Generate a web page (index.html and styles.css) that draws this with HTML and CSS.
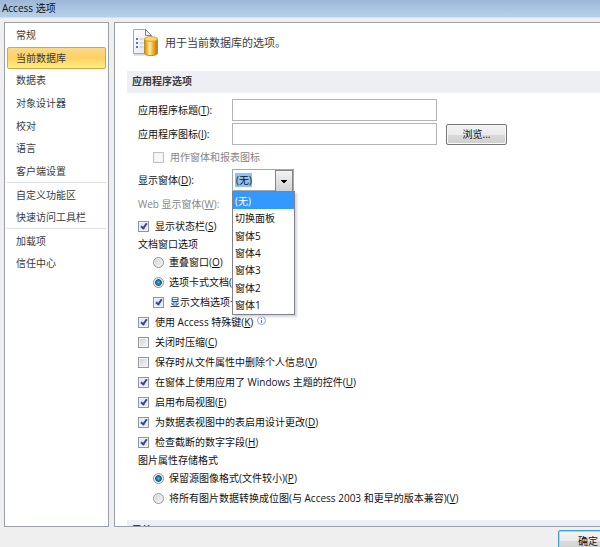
FILE: index.html
```html
<!DOCTYPE html>
<html lang="zh-CN">
<head>
    <meta charset="UTF-8">
    <meta name="viewport" content="width=device-width, initial-scale=1.0">
    <title>Access 选项</title>
    <link rel="stylesheet" href="styles.css">
</head>
<body>
    <header class="titlebar">Access 选项</header>
    <div class="panels">
        <nav class="sidebar">
            <div class="nav-group nav-main">
                <a href="#">常规</a>
                <a href="#" class="active">当前数据库</a>
                <a href="#">数据表</a>
                <a href="#">对象设计器</a>
                <a href="#">校对</a>
                <a href="#">语言</a>
                <a href="#">客户端设置</a>
            </div>
            <div class="nav-group">
                <a href="#">自定义功能区</a>
                <a href="#">快速访问工具栏</a>
            </div>
            <div class="nav-group">
                <a href="#">加载项</a>
                <a href="#">信任中心</a>
            </div>
        </nav>
        <main class="content">
            <div class="intro">
                <svg width="26" height="28" viewBox="0 0 26 28" aria-hidden="true">
                    <defs>
                        <linearGradient id="gold" x1="0" x2="1" y1="0" y2="0">
                            <stop offset="0" stop-color="#c98a14"/>
                            <stop offset=".2" stop-color="#f0b93a"/>
                            <stop offset=".4" stop-color="#fff0a8"/>
                            <stop offset=".65" stop-color="#f0b32c"/>
                            <stop offset="1" stop-color="#b87508"/>
                        </linearGradient>
                        <linearGradient id="paper" x1="0" x2="1" y1="0" y2="1">
                            <stop offset="0" stop-color="#fff"/>
                            <stop offset="1" stop-color="#dfe7f1"/>
                        </linearGradient>
                    </defs>
                    <path d="M1 25.5h13" stroke="#d5d5d8" stroke-width="2"/>
                    <path d="M.5 .5h12l6 6v18H.5z" fill="url(#paper)" stroke="#9aabc2"/>
                    <path d="M12.5 .5v6h6z" fill="#e6edf6" stroke="#7187a5"/>
                    <path d="M3 10h2M3 14h2M3 18h2" stroke="#557bb0" stroke-width="2"/>
                    <path d="M6.5 10h4M6.5 14h4M6.5 18h4" stroke="#b5c3d8"/>
                    <path d="M11.5 10v14c0 3.5 13 3.5 13 0V10z" fill="url(#gold)" stroke="#c48a20"/>
                    <ellipse cx="18" cy="10" rx="6.5" ry="2.3" fill="#ffd768" stroke="#d9a235"/>
                </svg>
                <span>用于当前数据库的选项。</span>
            </div>
            <h2>应用程序选项</h2>
            <form class="options">
                <div class="field">
                    <label for="appTitle">应用程序标题(<u>T</u>):</label>
                    <input type="text" id="appTitle">
                </div>
                <div class="field">
                    <label for="appIcon">应用程序图标(<u>I</u>):</label>
                    <input type="text" id="appIcon">
                    <button type="button" class="browse">浏览...</button>
                </div>
                <label class="option sub icon-option disabled"><input type="checkbox" disabled>用作窗体和报表图标</label>
                <div class="field">
                    <label for="showForm">显示窗体(<u>D</u>):</label>
                    <div class="combo">
                        <select id="showForm">
                            <option>(无)</option>
                            <option>切换面板</option>
                            <option>窗体5</option>
                            <option>窗体4</option>
                            <option>窗体3</option>
                            <option>窗体2</option>
                            <option>窗体1</option>
                        </select>
                        <ul class="dropdown">
                            <li class="current">(无)</li>
                            <li>切换面板</li>
                            <li>窗体5</li>
                            <li>窗体4</li>
                            <li>窗体3</li>
                            <li>窗体2</li>
                            <li>窗体1</li>
                        </ul>
                    </div>
                </div>
                <div class="field disabled">
                    <span>Web 显示窗体(<u>W</u>):</span>
                </div>
                <label class="option"><input type="checkbox" checked>显示状态栏(<u>S</u>)</label>
                <h3>文档窗口选项</h3>
                <label class="option sub"><input type="radio" name="docWindow">重叠窗口(<u>O</u>)</label>
                <label class="option sub"><input type="radio" name="docWindow" checked>选项卡式文档(<u>B</u>)</label>
                <label class="option sub"><input type="checkbox" checked>显示文档选项卡(<u>D</u>)</label>
                <label class="option"><input type="checkbox" checked><span>使用 Access 特殊键(<u>K</u>)</span><svg class="info" width="9" height="9" viewBox="0 0 9 9" aria-hidden="true">
                        <circle cx="4.5" cy="4.5" r="4" fill="#f6f9fe" stroke="#86a9dd"/>
                        <path d="M4.5 2v1M4.5 4v3" stroke="#4a7cc4"/>
                    </svg></label>
                <label class="option"><input type="checkbox">关闭时压缩(<u>C</u>)</label>
                <label class="option"><input type="checkbox">保存时从文件属性中删除个人信息(<u>V</u>)</label>
                <label class="option"><input type="checkbox" checked>在窗体上使用应用了 Windows 主题的控件(<u>U</u>)</label>
                <label class="option"><input type="checkbox" checked>启用布局视图(<u>E</u>)</label>
                <label class="option"><input type="checkbox" checked>为数据表视图中的表启用设计更改(<u>D</u>)</label>
                <label class="option"><input type="checkbox" checked>检查截断的数字字段(<u>H</u>)</label>
                <h3>图片属性存储格式</h3>
                <label class="option sub"><input type="radio" name="picFormat" checked>保留源图像格式(文件较小)(<u>P</u>)</label>
                <label class="option sub"><input type="radio" name="picFormat">将所有图片数据转换成位图(与 Access 2003 和更早的版本兼容)(<u>V</u>)</label>
            </form>
            <h2>导航</h2>
        </main>
    </div>
    <footer class="actions">
        <button type="button" class="ok">确定</button>
    </footer>
</body>
</html>
```

FILE: styles.css
```css
* {
    box-sizing: border-box;
}
body {
    margin: 0;
    height: 100vh;
    display: flex;
    flex-direction: column;
    overflow: hidden;
    background: #efefef;
    color: #111;
    font: 10px/16px "Open Sans", "Noto Sans CJK SC", sans-serif;
}
input, select, button {
    margin: 0;
    font: inherit;
    color: inherit;
}
.titlebar {
    flex: none;
    height: 18px;
    padding-left: 2px;
    border-bottom: 1px solid #d3e1ef;
    background: linear-gradient(#9db8d6, #b5d0ea);
}
.panels {
    flex: 1;
    min-height: 0;
    display: flex;
    gap: 5px;
    padding: 4px 0 0 4px;
}
.sidebar, .content {
    border: 1px solid #9b9fa8;
    background: #fff;
    overflow: hidden;
}
.sidebar {
    flex: none;
    width: 105px;
    padding: 1px 2px;
}
.nav-group {
    display: grid;
    grid-auto-rows: minmax(22px, auto);
}
.nav-main {
    min-height: 158px;
}
.nav-group + .nav-group {
    padding-top: 1px;
    border-top: 1px solid #dedfe3;
}
.nav-group a {
    display: flex;
    align-items: center;
    padding-left: 8px;
    border: 1px solid transparent;
    border-radius: 2px;
    color: #3b3b3b;
    text-decoration: none;
}
.nav-group .active {
    border-color: #d7a545;
    background: linear-gradient(#fbd98a, #fdd063 50%, #fff07f);
}
.content {
    flex: 1;
    border-right: 0;
    padding-left: 12px;
}
.intro {
    display: flex;
    align-items: center;
    gap: 6px;
    height: 48px;
    padding: 0 0 8px 6px;
    font-size: 11px;
    color: #3b3b3b;
}
h2 {
    margin: 0;
    padding: 2px 5px 4px;
    background: #eeeff4;
    font-size: 10px;
    line-height: 16px;
    font-weight: bold;
    color: #3b3b3b;
}
h3 {
    margin: 0;
    font-size: 10px;
    line-height: 16px;
    font-weight: normal;
}
.options {
    padding: 5px 0 12px 11px;
}
.field {
    display: flex;
    align-items: center;
    height: 24px;
}
.field > label {
    width: 94px;
}
.field input {
    width: 205px;
    height: 22px;
    border: 1px solid #b3b4bb;
    background: #fff;
}
button {
    border: 1px solid #767676;
    border-radius: 2px;
    background: linear-gradient(#f3f3f3, #ebebeb 50%, #dadada 51%, #cfcfcf);
    box-shadow: inset 0 0 0 1px #f8f8f8;
    padding: 0;
}
.browse {
    width: 61px;
    height: 21px;
    margin-left: 9px;
}
.option {
    display: flex;
    align-items: center;
    height: 20px;
    white-space: pre;
}
.sub {
    padding-left: 15px;
}
.icon-option {
    height: 22px;
}
.disabled {
    color: #868686;
}
input[type=checkbox], input[type=radio] {
    appearance: none;
    flex: none;
    width: 11px;
    height: 11px;
    margin-right: 6px;
    border: 1px solid #92959b;
    background: linear-gradient(135deg, #cdd1d6, #f8f8f8);
    box-shadow: inset 0 0 0 1px #f2f2f2;
}
input[type=radio] {
    margin-right: 5px;
    border-radius: 50%;
}
input[type=checkbox]:checked {
    background: #e3e8f2;
}
input[type=checkbox]:checked::before {
    content: "";
    display: block;
    box-sizing: content-box;
    width: 2px;
    height: 5px;
    margin-left: 3px;
    border: solid #35499a;
    border-width: 0 2px 2px 0;
    transform: rotate(35deg);
}
input[type=radio]:checked {
    background: radial-gradient(circle, #4fc0ea 0, #12577f 3px, #eef1f3 4px);
}
input[type=checkbox]:disabled {
    border-color: #c2c2c2;
    background: #f8f8f8;
}
.info {
    align-self: flex-start;
    margin: 4px 0 0 4px;
}
.combo {
    position: relative;
    width: 62px;
}
.combo::after {
    content: "";
    position: absolute;
    top: 1px;
    right: 1px;
    width: 16px;
    height: 20px;
    border: 1px solid #858585;
    background:
        conic-gradient(from -45deg at 50% 100%, #000 90deg, transparent 0) center / 6px 3px no-repeat,
        linear-gradient(#f3f3f3, #d2d2d2);
    pointer-events: none;
}
.combo select {
    appearance: none;
    display: block;
    width: 100%;
    height: 22px;
    padding: 0 0 0 3px;
    border: 1px solid #a5a7ae;
    border-radius: 0;
    background: linear-gradient(#8cc2f8, #8cc2f8) 2px 3px / 17px 14px no-repeat #fff;
}
.dropdown {
    position: absolute;
    z-index: 1;
    top: 22px;
    left: 0;
    width: 63px;
    min-height: 124px;
    display: grid;
    margin: 0;
    padding: 0;
    border: 1px solid #80838c;
    background: #fff;
    box-shadow: 2px 2px 2px #d5d5e2;
    list-style: none;
}
.dropdown li {
    display: flex;
    align-items: center;
    padding-left: 2px;
}
.dropdown .current {
    background: #3399ff;
    color: #fff;
}
.actions {
    flex: none;
    display: flex;
    justify-content: flex-end;
    height: 20px;
    padding-top: 3px;
}
.ok {
    flex: none;
    width: 60px;
    height: 22px;
    margin-right: -18px;
    border-color: #3c9fc4;
    box-shadow: inset 0 0 0 1px #9bdcf0;
}
```
